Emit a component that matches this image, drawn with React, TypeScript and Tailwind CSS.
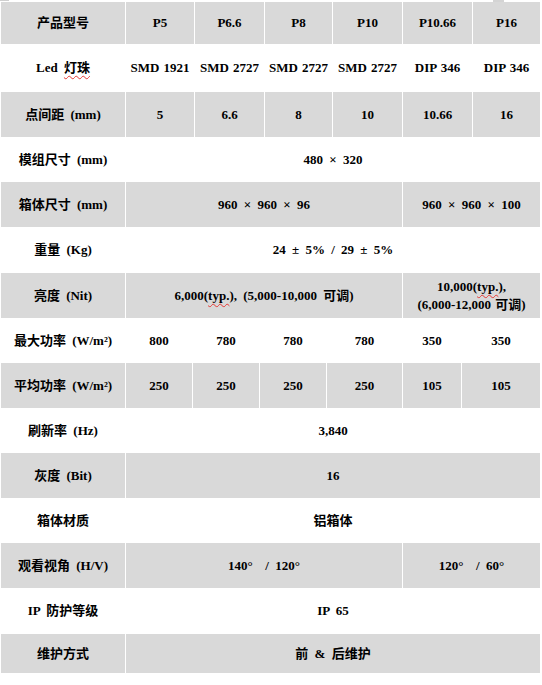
import React from "react";

const font = { fontFamily: '"Liberation Serif", "Noto Sans CJK SC", serif' };

const Squiggle: React.FC<{ children: React.ReactNode }> = ({ children }) => (
  <span className="underline decoration-wavy decoration-[#e53935] decoration-1 underline-offset-[3px]">
    {children}
  </span>
);

type CellProps = { w: string; gray?: boolean; children?: React.ReactNode };

const Cell: React.FC<CellProps> = ({ w, gray, children }) => (
  <div
    className={`${w} shrink-0 flex items-center justify-center text-center leading-[18px] ${
      gray ? "bg-[#d9d9d9]" : "bg-white"
    }`}
  >
    {children}
  </div>
);

const Row: React.FC<{ h: string; children: React.ReactNode }> = ({ h, children }) => (
  <div className={`flex gap-px ${h}`}>{children}</div>
);

const App: React.FC = () => {
  return (
    <div
      className="w-[542px] min-h-[685px] bg-white text-black text-[13px] font-bold [word-spacing:3px]"
      style={font}
    >
      <div className="flex h-[2px]">
        <div className="w-[9px] h-[1px] bg-[#cfcfcf]" />
        <div className="ml-[484px] w-[11px] h-[2px] bg-[#d4d4d4]" />
      </div>
      <div className="pl-[1px] flex flex-col">
        {/* 产品型号 */}
        <Row h="h-[42px]">
          <Cell w="w-[124px]" gray>产品型号</Cell>
          <Cell w="w-[68px]" gray>P5</Cell>
          <Cell w="w-[69px]" gray>P6.6</Cell>
          <Cell w="w-[67px]" gray>P8</Cell>
          <Cell w="w-[69px]" gray>P10</Cell>
          <Cell w="w-[69px]" gray>P10.66</Cell>
          <Cell w="w-[67px]" gray>P16</Cell>
        </Row>
        <div className="flex gap-px h-[48px] [word-spacing:1px]">
          <Cell w="w-[124px]">
            <span className="[word-spacing:3px]">
              Led <Squiggle>灯珠</Squiggle>
            </span>
          </Cell>
          <Cell w="w-[68px]">SMD 1921</Cell>
          <Cell w="w-[69px]">SMD 2727</Cell>
          <Cell w="w-[67px]">SMD 2727</Cell>
          <Cell w="w-[69px]">SMD 2727</Cell>
          <Cell w="w-[69px]">DIP 346</Cell>
          <Cell w="w-[67px]">DIP 346</Cell>
        </div>
        <Row h="h-[45px]">
          <Cell w="w-[124px]" gray>点间距 (mm)</Cell>
          <Cell w="w-[68px]" gray>5</Cell>
          <Cell w="w-[69px]" gray>6.6</Cell>
          <Cell w="w-[67px]" gray>8</Cell>
          <Cell w="w-[69px]" gray>10</Cell>
          <Cell w="w-[69px]" gray>10.66</Cell>
          <Cell w="w-[67px]" gray>16</Cell>
        </Row>
        <Row h="h-[45px]">
          <Cell w="w-[124px]">模组尺寸 (mm)</Cell>
          <Cell w="w-[414px]">480 × 320</Cell>
        </Row>
        <Row h="h-[45px]">
          <Cell w="w-[124px]" gray>箱体尺寸 (mm)</Cell>
          <Cell w="w-[276px]" gray>960 × 960 × 96</Cell>
          <Cell w="w-[137px]" gray>960 × 960 × 100</Cell>
        </Row>
        <Row h="h-[46px]">
          <Cell w="w-[124px]">重量 (Kg)</Cell>
          <Cell w="w-[414px]">24 ± 5% / 29 ± 5%</Cell>
        </Row>
        <Row h="h-[45px]">
          <Cell w="w-[124px]" gray>亮度 (Nit)</Cell>
          <Cell w="w-[276px]" gray>
            <span>
              6,000(<Squiggle>typ.</Squiggle>), (5,000-10,000 可调)
            </span>
          </Cell>
          <Cell w="w-[137px]" gray>
            <span className="[word-spacing:1px]">
              10,000(<Squiggle>typ.</Squiggle>),
              <br />
              (6,000-12,000 可调)
            </span>
          </Cell>
        </Row>
        {/* power rows use their own column widths */}
        <Row h="h-[45px]">
          <Cell w="w-[124px]">最大功率 (W/m²)</Cell>
          <Cell w="w-[66px]">800</Cell>
          <Cell w="w-[66px]">780</Cell>
          <Cell w="w-[66px]">780</Cell>
          <Cell w="w-[75px]">780</Cell>
          <Cell w="w-[58px]">350</Cell>
          <Cell w="w-[78px]">350</Cell>
        </Row>
        <Row h="h-[45px]">
          <Cell w="w-[124px]" gray>平均功率 (W/m²)</Cell>
          <Cell w="w-[66px]" gray>250</Cell>
          <Cell w="w-[66px]" gray>250</Cell>
          <Cell w="w-[66px]" gray>250</Cell>
          <Cell w="w-[75px]" gray>250</Cell>
          <Cell w="w-[58px]" gray>105</Cell>
          <Cell w="w-[78px]" gray>105</Cell>
        </Row>
        <Row h="h-[45px]">
          <Cell w="w-[124px]">刷新率 (Hz)</Cell>
          <Cell w="w-[414px]">3,840</Cell>
        </Row>
        <Row h="h-[45px]">
          <Cell w="w-[124px]" gray>灰度 (Bit)</Cell>
          <Cell w="w-[414px]" gray>16</Cell>
        </Row>
        <Row h="h-[45px]">
          <Cell w="w-[124px]">箱体材质</Cell>
          <Cell w="w-[414px]">铝箱体</Cell>
        </Row>
        <Row h="h-[45px]">
          <Cell w="w-[124px]" gray>观看视角 (H/V)</Cell>
          <Cell w="w-[276px]" gray>140° &nbsp;/ 120°</Cell>
          <Cell w="w-[137px]" gray>120° &nbsp;/ 60°</Cell>
        </Row>
        <Row h="h-[46px]">
          <Cell w="w-[124px]">IP 防护等级</Cell>
          <Cell w="w-[414px]">IP 65</Cell>
        </Row>
        <Row h="h-[39px]">
          <Cell w="w-[124px]" gray>维护方式</Cell>
          <Cell w="w-[414px]" gray>前 &amp; 后维护</Cell>
        </Row>
      </div>
    </div>
  );
};

export default App;
